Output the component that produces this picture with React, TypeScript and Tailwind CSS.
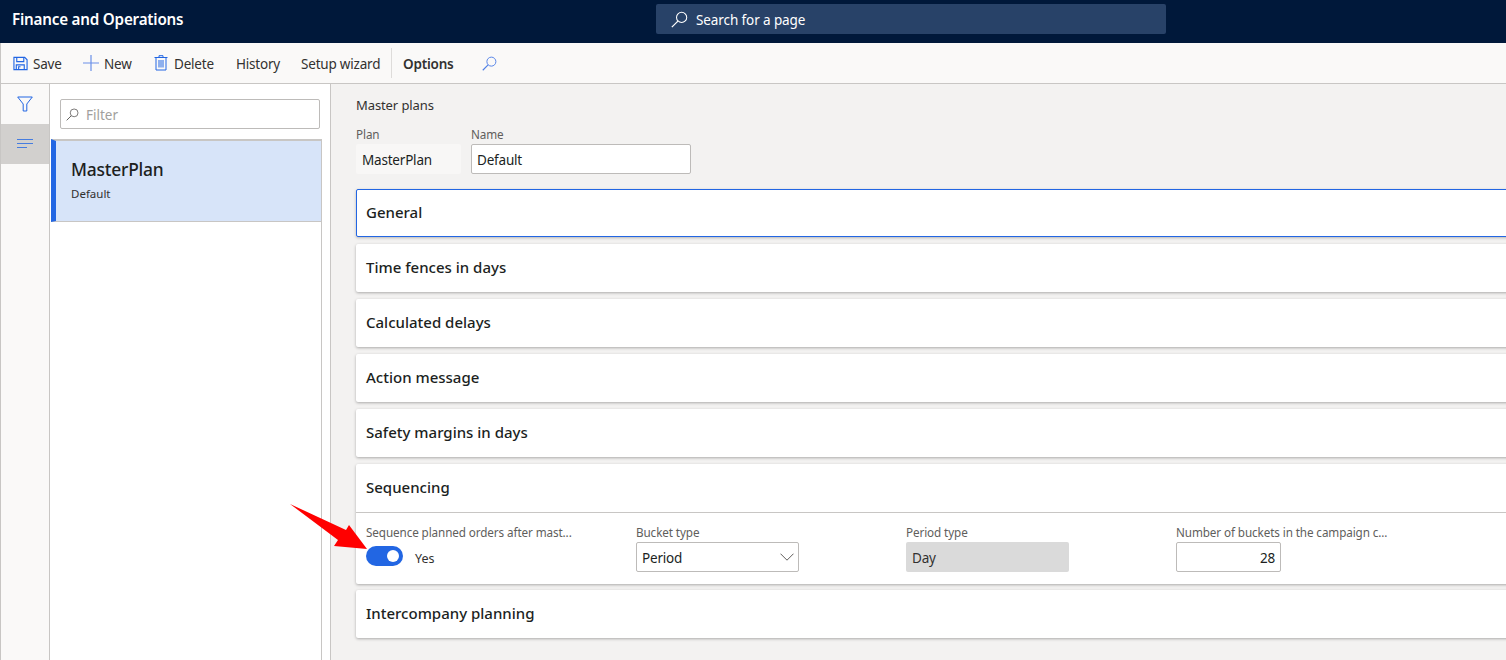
import React from "react";

const font = { fontFamily: '"Noto Sans", "Open Sans", sans-serif' };

function Glass({ className, stroke }: { className: string; stroke: string }) {
  return (
    <svg viewBox="0 0 16 16" className={className} fill="none" stroke={stroke} strokeWidth="1">
      <circle cx="10" cy="6" r="4.8" />
      <path d="M6.5 9.5 L0.8 15.2" strokeWidth="1.2" />
    </svg>
  );
}

function Section({ title, active }: { title: string; active?: boolean }) {
  return (
    <div
      className={
        active
          ? "h-12 shrink-0 bg-white border border-[#2266e3] rounded-[2px] flex items-center pl-[9px] pb-[2px] shadow-[0_1px_3px_rgba(0,0,0,0.25)]"
          : "h-12 shrink-0 bg-white rounded-[2px] flex items-center pl-[10px] pb-[2px] shadow-[0_1px_3px_rgba(0,0,0,0.3)]"
      }
    >
      <span className="text-[15px] font-medium text-[#201f1e]">{title}</span>
    </div>
  );
}

function Label({ children }: { children: React.ReactNode }) {
  return <div className="text-[11.7px] leading-[14px] mb-[3px] tracking-[-0.1px] text-[#605e5c] whitespace-nowrap">{children}</div>;
}

function ToolItem({ icon, label, cls }: { icon?: React.ReactNode; label: string; cls: string }) {
  return (
    <div className={"flex items-center " + cls}>
      {icon}
      <span className="pt-[2px] text-[13.5px] tracking-[-0.2px] text-[#323130]">{label}</span>
    </div>
  );
}

export default function App() {
  return (
    <div className="relative w-[1506px] h-[660px] overflow-hidden flex flex-col bg-[#f3f2f1]" style={font}>
      <header className="h-[43px] shrink-0 bg-[#00183a] relative flex items-center">
        <span className="pl-3 pb-[4px] text-[15.2px] font-semibold tracking-[-0.2px] text-white">Finance and Operations</span>
        <div className="absolute left-[656px] top-1 w-[510px] h-[30px] rounded-[2px] bg-[#284268] flex items-center pl-[15px]">
          <Glass className="w-[17px] h-[17px] mr-2" stroke="#ffffff" />
          <span className="pt-[2px] text-[13.5px] tracking-[-0.1px] text-white">Search for a page</span>
        </div>
      </header>

      <div className="h-[41px] shrink-0 bg-[#faf9f8] border-b border-[#c8c6c4] border-l flex items-center">
        <ToolItem
          cls="pl-3 w-[82px]"
          label="Save"
          icon={
            <svg viewBox="0 0 16 16" className="w-[15px] h-[15px] mr-[5px]" fill="none" stroke="#2266e3" strokeWidth="1.2">
              <path d="M1 1.5 H12.5 L15 4 V14.5 H1 Z" />
              <path d="M4 1.5 V6 H11.5 V1.5 M3.5 14.5 V9.5 H12 V14.5 M6 14.5 V11.5 H8" />
            </svg>
          }
        />
        <ToolItem
          cls="w-[71px]"
          label="New"
          icon={
            <svg viewBox="0 0 16 16" className="w-4 h-4 mr-[5px]" fill="none" stroke="#6a8fe8" strokeWidth="1.2">
              <path d="M8 0 V16 M0 8 H16" />
            </svg>
          }
        />
        <ToolItem
          cls="w-[82px]"
          label="Delete"
          icon={
            <svg viewBox="0 0 14 16" className="w-[14px] h-4 mr-[6px]" fill="none" stroke="#2266e3" strokeWidth="1">
              <path d="M0.5 2.5 H13.5 M5 2.5 V0.7 H9 V2.5 M2 2.5 V15 H12 V2.5 M5 5 V12.5 M7 5 V12.5 M9 5 V12.5" />
            </svg>
          }
        />
        <ToolItem cls="w-[65px]" label="History" />
        <ToolItem cls="w-[90px]" label="Setup wizard" />
        <div className="w-px h-[30px] bg-[#dedcda] mr-[11px]" />
        <span className="pt-[2px] text-[13.5px] font-semibold tracking-[-0.2px] text-[#323130] w-[79px]">Options</span>
        <Glass className="w-[15px] h-[15px]" stroke="#4f7fe6" />
      </div>

      <div className="flex-1 flex min-h-0">
        <aside className="w-[50px] shrink-0 bg-[#faf9f8] border-l border-[#c8c6c4] border-r">
          <div className="h-10 flex items-center justify-center">
            <svg viewBox="0 0 16 16" className="w-[16px] h-[16px]" fill="none" stroke="#2266e3" strokeWidth="1">
              <path d="M0.7 1 H15.3 L9.8 8 V15 H6.2 V8 Z" />
            </svg>
          </div>
          <div className="h-10 bg-[#d2d0ce] flex items-center justify-center">
            <svg viewBox="0 0 16 10" className="w-4 h-[10px]" fill="none" stroke="#2266e3" strokeWidth="0.8">
              <path d="M0 0.5 H16 M0 4.5 H16 M0 8.5 H10" />
            </svg>
          </div>
        </aside>

        <section className="w-[281px] shrink-0 bg-white border-r border-[#c8c6c4] relative flex flex-col pl-px">
          <div className="pt-[15px] pl-[9px] pr-[10px]">
            <div className="h-[30px] w-[260px] bg-white border border-[#bdbbb9] rounded-[2px] flex items-center pl-[5px]">
              <Glass className="w-[13px] h-[13px] mr-[7px]" stroke="#605e5c" />
              <span className="pt-[2px] text-[13.5px] text-[#a19f9d]">Filter</span>
            </div>
          </div>
          <div className="mt-[10px] flex-1 w-[271px] border-r border-[#c8c6c4] flex flex-col">
            <div className="h-[83px] bg-[#d7e4f9] border-t-2 border-t-[#c8c6c4] border-b border-b-[#c8c6c4] border-l-[5px] border-l-[#2266e3] pl-[15px] pt-[16px]">
              <div className="text-[17.4px] leading-[24px] tracking-[-0.2px] text-[#201f1e] font-medium">MasterPlan</div>
              <div className="text-[11.5px] leading-[16px] mt-[5px] text-[#323130]">Default</div>
            </div>
          </div>
        </section>

        <main className="flex-1 min-w-0 pl-[25px] pt-[12px]">
          <div className="text-[13px] leading-[18px] tracking-[-0.1px] text-[#323130]">Master plans</div>
          <div className="flex mt-[13px] gap-[10px]">
            <div className="w-[105px]">
              <Label>Plan</Label>
              <div className="h-[30px] bg-[#f8f7f6] rounded-[2px] flex items-center pl-[6px] pt-[2px] text-[13.5px] tracking-[-0.2px] text-[#201f1e]">MasterPlan</div>
            </div>
            <div className="w-[220px]">
              <Label>Name</Label>
              <div className="h-[30px] bg-white border border-[#bdbbb9] rounded-[2px] flex items-center pl-[5px] pt-[2px] text-[13.5px] tracking-[-0.2px] text-[#201f1e]">Default</div>
            </div>
          </div>

          <div className="mt-[15px] w-[1170px] flex flex-col gap-[7px]">
            <Section title="General" active />
            <Section title="Time fences in days" />
            <Section title="Calculated delays" />
            <Section title="Action message" />
            <Section title="Safety margins in days" />
            <div className="h-[120px] shrink-0 bg-white rounded-[2px] shadow-[0_1px_3px_rgba(0,0,0,0.3)] flex flex-col">
              <div className="h-[49px] shrink-0 border-b border-[#c8c6c4] flex items-center pl-[10px] pb-[2px]">
                <span className="text-[15px] font-medium text-[#201f1e]">Sequencing</span>
              </div>
              <div className="flex pl-[10px] pt-[12px]">
                <div className="w-[270px]">
                  <Label>Sequence planned orders after mast...</Label>
                  <div className="flex mt-[7px]">
                    <div className="w-[37px] h-5 rounded-full bg-[#2266e3] flex items-center justify-end pr-[4px]">
                      <div className="w-3 h-3 rounded-full bg-white" />
                    </div>
                    <span className="ml-3 pt-[4px] text-[12.5px] text-[#323130]">Yes</span>
                  </div>
                </div>
                <div className="w-[270px]">
                  <Label>Bucket type</Label>
                  <div className="w-[163px] h-[30px] bg-white border border-[#bdbbb9] rounded-[2px] flex items-center justify-between pl-[5px] pr-[4px]">
                    <span className="pt-[2px] text-[13.5px] tracking-[-0.2px] text-[#201f1e]">Period</span>
                    <svg viewBox="0 0 14 8" className="w-[14px] h-2" fill="none" stroke="#605e5c" strokeWidth="1">
                      <path d="M0.5 0.7 L7 7.2 L13.5 0.7" />
                    </svg>
                  </div>
                </div>
                <div className="w-[270px]">
                  <Label>Period type</Label>
                  <div className="w-[163px] h-[30px] bg-[#dadada] rounded-[2px] flex items-center pl-[6px] pt-[2px] text-[13.5px] tracking-[-0.2px] text-[#323130]">Day</div>
                </div>
                <div className="w-[270px]">
                  <Label>Number of buckets in the campaign c...</Label>
                  <div className="w-[105px] h-[30px] bg-white border border-[#bdbbb9] rounded-[2px] flex items-center justify-end pr-[5px] pt-[2px] text-[13.5px] tracking-[-0.2px] text-[#201f1e]">28</div>
                </div>
              </div>
            </div>
            <div className="-mt-px">
              <Section title="Intercompany planning" />
            </div>
          </div>
        </main>
      </div>

      <svg viewBox="0 0 1506 660" className="absolute inset-0 w-[1506px] h-[660px] pointer-events-none">
        <polygon points="290,504 346,530 349,525 367,549 334,546 338,540" fill="#ff0000" />
      </svg>
    </div>
  );
}
